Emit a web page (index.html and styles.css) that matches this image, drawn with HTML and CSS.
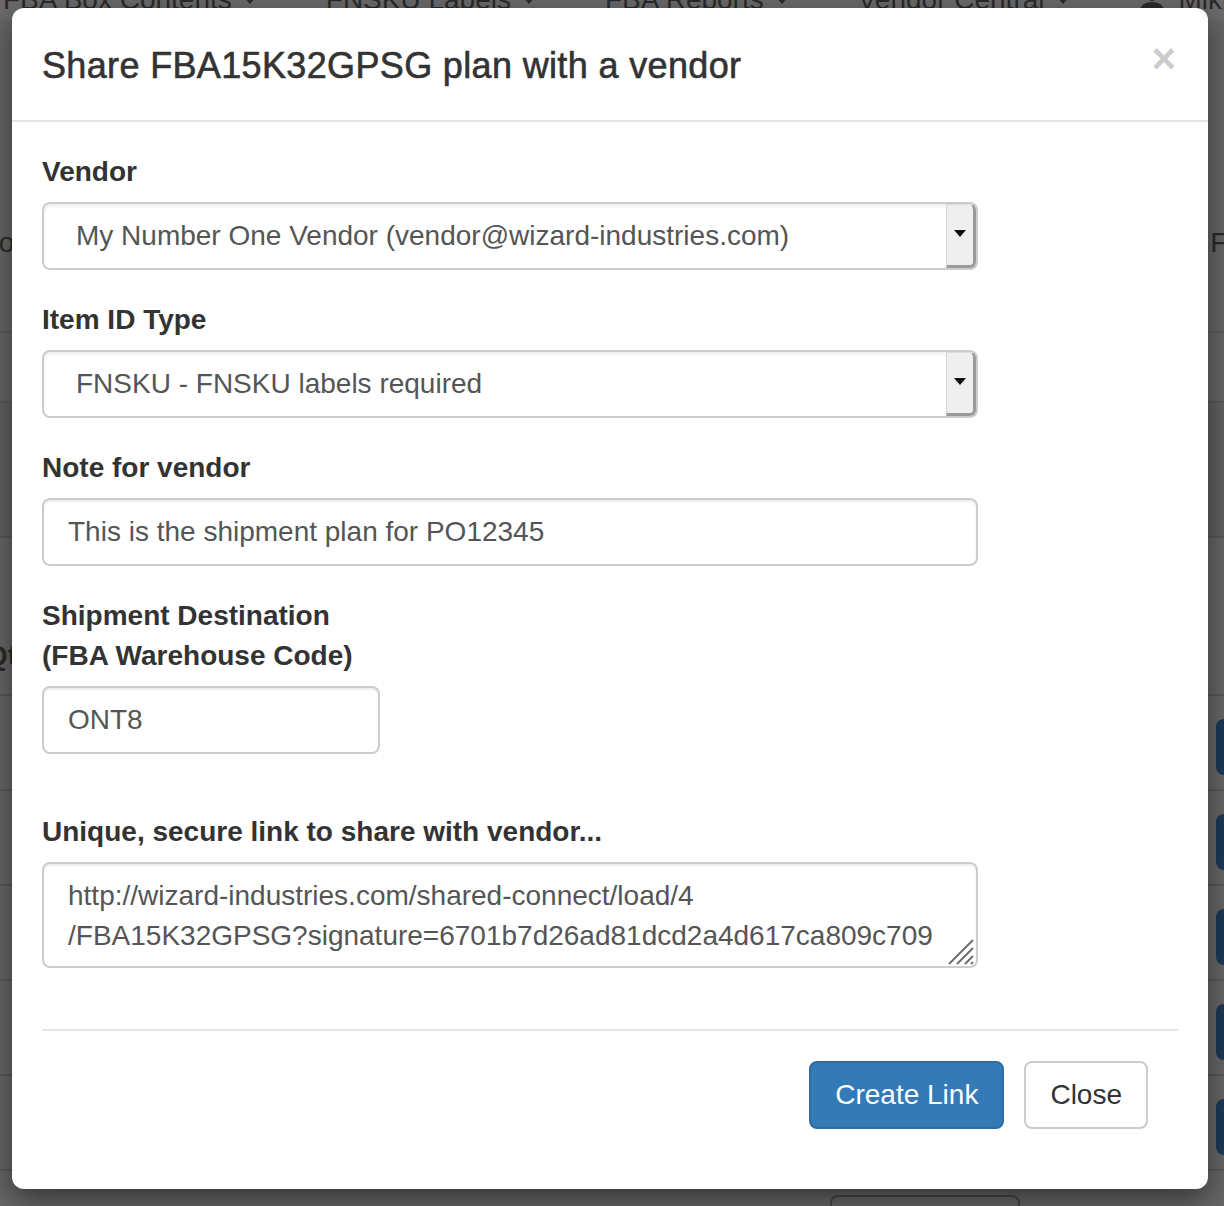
FILE: index.html
```html
<!DOCTYPE html>
<html lang="en">
<head>
  <meta charset="UTF-8">
  <title>Share plan with a vendor</title>
  <link rel="stylesheet" href="styles.css">
</head>
<body>
  <div class="page">
    <nav class="topnav">
      <span class="nav-item">FBA Box Contents <b class="caret"></b></span>
      <span class="nav-item">FNSKU Labels <b class="caret"></b></span>
      <span class="nav-item">FBA Reports <b class="caret"></b></span>
      <span class="nav-item">Vendor Central <b class="caret"></b></span>
      <span class="nav-item">
        <svg class="user-icon" width="26" height="24" viewBox="0 0 26 24"><circle cx="13" cy="7" r="6" fill="#2b2b2b"/><path d="M1 24c0-7 5-10 12-10s12 3 12 10z" fill="#2b2b2b"/></svg>
        Mikrah
      </span>
    </nav>

    <div class="filters">
      <span class="filter-left">Vendor</span>
      <span class="filter-right">Format</span>
    </div>

    <div class="plans">
      <div class="plan-row short"></div>
      <div class="plan-row mid"></div>
      <div class="plan-row head"><span class="col-q">Qty</span></div>
      <div class="plan-row"><span class="row-btn"></span></div>
      <div class="plan-row"><span class="row-btn"></span></div>
      <div class="plan-row"><span class="row-btn"></span></div>
      <div class="plan-row"><span class="row-btn"></span></div>
      <div class="plan-row"><span class="row-btn"></span></div>
      <div class="plan-row last"><span class="outline-btn"></span></div>
    </div>
  </div>

  <div class="modal">
    <div class="modal-header">
      <h4 class="modal-title">Share FBA15K32GPSG plan with a vendor</h4>
      <span class="close">&times;</span>
    </div>

    <div class="modal-body">
      <div class="form-group">
        <label class="form-label">Vendor</label>
        <div class="form-control select">
          <span class="select-value">My Number One Vendor (vendor@wizard-industries.com)</span>
          <span class="select-arrow"><i></i></span>
        </div>
      </div>

      <div class="form-group">
        <label class="form-label">Item ID Type</label>
        <div class="form-control select">
          <span class="select-value">FNSKU - FNSKU labels required</span>
          <span class="select-arrow"><i></i></span>
        </div>
      </div>

      <div class="form-group">
        <label class="form-label">Note for vendor</label>
        <div class="form-control">This is the shipment plan for PO12345</div>
      </div>

      <div class="form-group narrow">
        <label class="form-label">Shipment Destination (FBA Warehouse Code)</label>
        <div class="form-control">ONT8</div>
      </div>

      <div class="form-group link-group">
        <label class="form-label">Unique, secure link to share with vendor...</label>
        <div class="form-control textarea">http://wizard-industries.com/shared-connect/load/4<br>/FBA15K32GPSG?signature=6701b7d26ad81dcd2a4d617ca809c709
          <svg class="grip" width="26" height="26" viewBox="0 0 26 26">
            <path d="M1 25L25 1M9 25L25 9M17 25L25 17M23 25L25 23" stroke="#6f6f6f" stroke-width="2" fill="none"/>
          </svg>
        </div>
      </div>

      <hr class="divider">

      <div class="modal-footer">
        <button class="btn btn-primary">Create Link</button>
        <button class="btn btn-default">Close</button>
      </div>
    </div>
  </div>
</body>
</html>
```

FILE: styles.css
```css
body {
  margin: 0;
  height: 1206px;
  overflow: hidden;
  background-color: #676767;
  font-family: "Liberation Sans", Arial, sans-serif;
  color: #2b2b2b;
}

/* Page behind the backdrop */
.page {
  height: 1206px;
}

.topnav {
  display: flex;
  align-items: center;
  gap: 70px;
  margin-top: -20px;
  padding-left: 3px;
  height: 40px;
  font-size: 28px;
  line-height: 40px;
  white-space: nowrap;
  background-color: #6b6b6b;
}

.nav-item {
  display: flex;
  align-items: center;
  gap: 10px;
}

.caret {
  display: inline-block;
  margin-left: 2px;
  border-top: 7px solid #2b2b2b;
  border-left: 6px solid transparent;
  border-right: 6px solid transparent;
}

.user-icon {
  margin-right: 4px;
}

.filters {
  box-sizing: border-box;
  display: flex;
  justify-content: space-between;
  align-items: flex-start;
  height: 313px;
  padding-top: 203px;
  font-size: 28px;
  line-height: 40px;
  border-bottom: 2px solid #5e5e5e;
}

.filter-left {
  margin-left: -65px;
}

.filter-right {
  margin-right: -75px;
}

.plan-row {
  display: flex;
  align-items: center;
  justify-content: space-between;
  height: 93px;
  border-bottom: 2px solid #5a5a5a;
}

.plan-row.short {
  height: 68px;
}

.plan-row.mid {
  height: 133px;
  background-color: #626262;
}

.plan-row.head {
  box-sizing: border-box;
  align-items: flex-end;
  height: 158px;
  padding-bottom: 18px;
  font-size: 28px;
  line-height: 40px;
  font-weight: bold;
}

.col-q {
  margin-left: -14px;
}

.row-btn {
  width: 40px;
  height: 56px;
  margin-top: 8px;
  margin-left: auto;
  margin-right: -32px;
  background-color: #1d3a57;
  border-radius: 8px;
}

.plan-row.last {
  box-sizing: border-box;
  align-items: flex-start;
  padding-top: 24px;
  border-bottom: none;
}

.outline-btn {
  width: 186px;
  height: 30px;
  margin-left: 830px;
  border: 2px solid #474747;
  border-radius: 8px;
}

/* Modal */
.modal {
  position: absolute;
  top: 8px;
  left: 12px;
  width: 1196px;
  background-color: #fff;
  border-radius: 12px;
  box-shadow: 0 10px 30px rgba(0, 0, 0, 0.5);
  color: #333;
}

.modal-header {
  display: flex;
  justify-content: space-between;
  align-items: flex-start;
  padding: 30px;
  border-bottom: 2px solid #e5e5e5;
}

.modal-title {
  margin: 3px 0 0;
  font-size: 36px;
  line-height: 49px;
  font-weight: 500;
  letter-spacing: 0.35px;
  -webkit-text-stroke: 0.6px #333;
}

.close {
  margin-top: 0;
  margin-right: 2px;
  font-size: 42px;
  font-weight: bold;
  line-height: 1;
  color: #000;
  opacity: 0.2;
}

.modal-body {
  padding: 30px;
}

.form-group {
  margin-bottom: 30px;
}

.form-group.narrow {
  width: 338px;
}

.form-group.link-group {
  margin-top: 58px;
}

.form-label {
  display: block;
  margin-bottom: 10px;
  font-size: 28px;
  line-height: 40px;
  font-weight: bold;
}

.form-control {
  box-sizing: border-box;
  width: 936px;
  height: 68px;
  padding: 12px 24px;
  font-size: 28px;
  line-height: 40px;
  color: #555;
  background-color: #fff;
  border: 2px solid #ccc;
  border-radius: 8px;
  box-shadow: inset 0 2px 2px rgba(0, 0, 0, 0.075);
  white-space: nowrap;
}

.narrow .form-control {
  width: 338px;
}

.form-control.select {
  display: flex;
  align-items: stretch;
  padding: 0 0 0 32px;
  box-shadow: inset 0 3px 3px rgba(0, 0, 0, 0.06);
}

.select-value {
  flex: 1;
  align-self: center;
}

.select-arrow {
  display: flex;
  align-items: center;
  justify-content: center;
  width: 26px;
  background-color: #efefef;
  border-left: 1px solid #d4d4d4;
  border-right: 3px solid #9a9a9a;
  border-bottom: 3px solid #9a9a9a;
  border-top: 1px solid #dcdcdc;
  border-radius: 0 6px 6px 0;
}

.select-arrow i {
  display: block;
  margin-bottom: 4px;
  border-top: 7px solid #111;
  border-left: 6px solid transparent;
  border-right: 6px solid transparent;
}

.form-control.textarea {
  position: relative;
  height: 106px;
}

.grip {
  position: absolute;
  right: 2px;
  bottom: 1px;
}

.divider {
  margin: 61px 0 0;
  border: 0;
  border-top: 2px solid #e5e5e5;
}

.modal-footer {
  display: flex;
  justify-content: flex-end;
  gap: 20px;
  padding: 30px;
}

.btn {
  padding: 12px 24px;
  font-family: inherit;
  font-size: 28px;
  line-height: 40px;
  border: 2px solid;
  border-radius: 8px;
  cursor: pointer;
}

.btn-primary {
  background-color: #337ab7;
  border-color: #2e6da4;
  color: #fff;
}

.btn-default {
  background-color: #fff;
  border-color: #ccc;
  color: #333;
}
```
